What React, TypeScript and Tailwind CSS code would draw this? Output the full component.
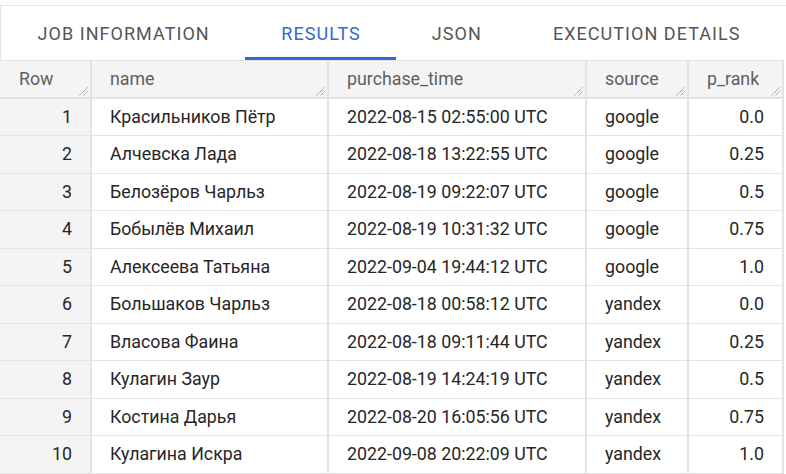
import React from "react";

const rows = [
  ["1", "Красильников Пётр", "2022-08-15 02:55:00 UTC", "google", "0.0"],
  ["2", "Алчевска Лада", "2022-08-18 13:22:55 UTC", "google", "0.25"],
  ["3", "Белозёров Чарльз", "2022-08-19 09:22:07 UTC", "google", "0.5"],
  ["4", "Бобылёв Михаил", "2022-08-19 10:31:32 UTC", "google", "0.75"],
  ["5", "Алексеева Татьяна", "2022-09-04 19:44:12 UTC", "google", "1.0"],
  ["6", "Большаков Чарльз", "2022-08-18 00:58:12 UTC", "yandex", "0.0"],
  ["7", "Власова Фаина", "2022-08-18 09:11:44 UTC", "yandex", "0.25"],
  ["8", "Кулагин Заур", "2022-08-19 14:24:19 UTC", "yandex", "0.5"],
  ["9", "Костина Дарья", "2022-08-20 16:05:56 UTC", "yandex", "0.75"],
  ["10", "Кулагина Искра", "2022-09-08 20:22:09 UTC", "yandex", "1.0"],
];

function Grip() {
  return (
    <svg
      className="absolute right-[2px] bottom-[1px]"
      width="9"
      height="9"
      viewBox="0 0 9 9"
    >
      <line x1="8.5" y1="0.5" x2="0.5" y2="8.5" stroke="#6b6b6b" strokeWidth="0.9" strokeDasharray="1 0.8" />
      <line x1="8.5" y1="4.5" x2="4.5" y2="8.5" stroke="#6b6b6b" strokeWidth="0.9" strokeDasharray="1 0.8" />
    </svg>
  );
}

const widths = ["w-[92px]", "w-[237px]", "w-[258px]", "w-[102px]", "w-[95px]"];

export default function App() {
  return (
    <div
      className="w-[786px] h-[474px] bg-white overflow-hidden text-[17.8px]"
      style={{ fontFamily: "Roboto, 'Noto Sans', sans-serif" }}
    >
      <div className="h-[5px]" />
      <div className="h-px bg-[#e3e3e3]" />
      <div className="h-[54px] flex border-l-[1.5px] border-[#e3e3e3] text-[18px] tracking-[1.05px]">
        <div className="pl-[36.5px] pr-[35.5px] flex items-center text-[#555555]">
          JOB INFORMATION
        </div>
        <div className="pl-[36px] pr-[35px] flex items-center text-[#3367d6] relative">
          RESULTS
          <div className="absolute left-0 right-0 bottom-0 h-[3px] bg-[#3367d6]" />
        </div>
        <div className="pl-[36px] pr-[35px] flex items-center text-[#555555]">
          JSON
        </div>
        <div className="pl-[36px] pr-[35px] flex items-center text-[#555555]">
          EXECUTION DETAILS
        </div>
      </div>
      <div className="w-[784px]">
        <div className="flex h-[38.8px] bg-[#f4f4f4] border-b-2 border-t border-[#e3e3e3] text-[#5f5f5f]">
          {["Row", "name", "purchase_time", "source", "p_rank"].map((h, i) => (
            <div
              key={h}
              className={`${widths[i]} relative flex items-center border-r-2 border-[#e3e3e3] ${
                i === 0 ? "pl-[19px]" : "pl-[18px]"
              }`}
            >
              {h}
              <Grip />
            </div>
          ))}
        </div>
        {rows.map((r) => (
          <div key={r[0]} className="flex h-[37.5px] border-b border-[#e3e3e3] text-[#262626]">
            <div className="w-[92px] flex items-center justify-end pr-[18px] bg-[#f4f4f4] border-r-2 border-[#e3e3e3]">
              {r[0]}
            </div>
            <div className="w-[237px] flex items-center pl-[18px] border-r-2 border-[#e3e3e3]">
              {r[1]}
            </div>
            <div className="w-[258px] flex items-center pl-[18px] border-r-2 border-[#e3e3e3]">
              {r[2]}
            </div>
            <div className="w-[102px] flex items-center pl-[18px] border-r-2 border-[#e3e3e3]">
              {r[3]}
            </div>
            <div className="w-[95px] flex items-center justify-end pr-[18px] border-r-2 border-[#e3e3e3]">
              {r[4]}
            </div>
          </div>
        ))}
      </div>
    </div>
  );
}
